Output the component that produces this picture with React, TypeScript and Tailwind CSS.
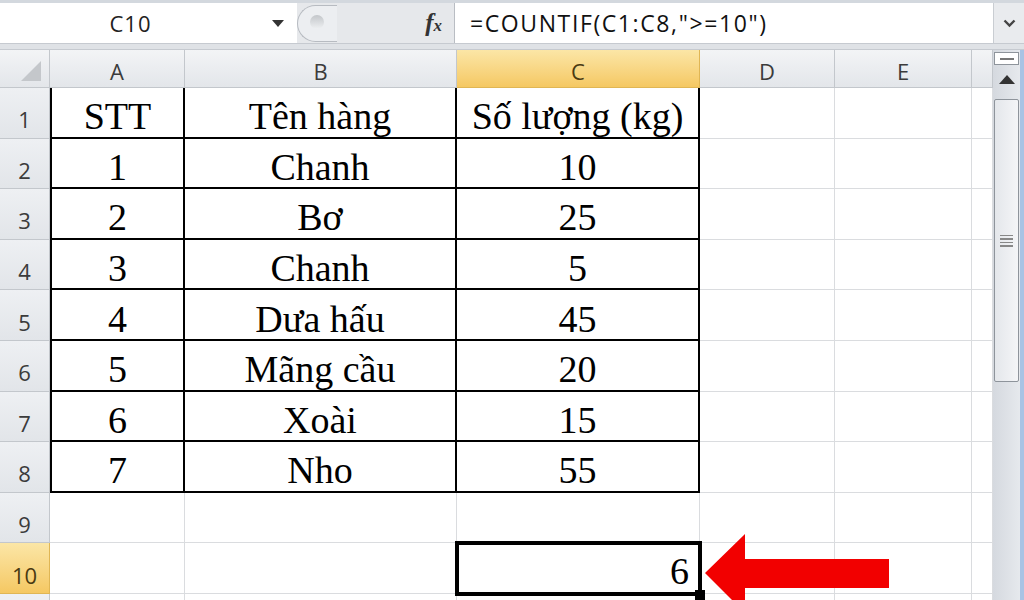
import React from 'react'

const cols = [
  { key: 'A', w: 'w-[135px]' },
  { key: 'B', w: 'w-[272px]' },
  { key: 'C', w: 'w-[243px]' },
  { key: 'D', w: 'w-[135px]' },
  { key: 'E', w: 'w-[137px]' },
  { key: 'F', w: 'flex-1' },
]

const data: [string, string, string][] = [
  ['STT', 'Tên hàng', 'Số lượng (kg)'],
  ['1', 'Chanh', '10'],
  ['2', 'Bơ', '25'],
  ['3', 'Chanh', '5'],
  ['4', 'Dưa hấu', '45'],
  ['5', 'Mãng cầu', '20'],
  ['6', 'Xoài', '15'],
  ['7', 'Nho', '55'],
]

const uiFont = { fontFamily: '"Open Sans", "Noto Sans", sans-serif' }
const cellFont = { fontFamily: '"Liberation Serif", "Times New Roman", serif' }

function FormulaBar() {
  return (
    <div className="flex h-[40px] bg-white">
      <div className="relative flex w-[297px] items-center justify-center bg-white" style={uiFont}>
        <span className="-ml-[36px] text-[22px] tracking-[1px] text-[#222]">C10</span>
        <svg className="absolute left-[272px] top-[17px]" width="12" height="7" viewBox="0 0 12 7">
          <path d="M0 0 L12 0 L6 7 Z" fill="#333" />
        </svg>
      </div>
      <div className="relative flex w-[158px] items-center justify-end border-r border-[#b9bdc3] bg-[#e6e8eb] pr-[12px]">
        <div className="absolute left-0 top-[2px] h-[37px] w-[40px] rounded-l-[20px] border-y border-l border-[#b7bbc1] bg-[#eceef1]" />
        <div className="absolute left-[13px] top-[12px] h-[14px] w-[14px] rounded-full bg-gradient-to-b from-[#c3c6ca] to-[#eef0f2]" />
        <span className="text-[25px] font-bold italic text-[#333]" style={cellFont}>
          f<span className="text-[17px]">x</span>
        </span>
      </div>
      <div className="flex flex-1 items-center pl-[15px]" style={uiFont}>
        <span className="text-[23px] tracking-[1.6px] text-[#111]">=COUNTIF(C1:C8,"&gt;=10")</span>
      </div>
      <div className="flex w-[31px] items-center justify-center border-l border-[#c9cdd2] bg-[#e9ebee]">
        <svg width="13" height="9" viewBox="0 0 13 9">
          <path d="M1.5 1.5 L6.5 6.5 L11.5 1.5" fill="none" stroke="#444" strokeWidth="2.4" />
        </svg>
      </div>
    </div>
  )
}

function HeaderRow() {
  return (
    <div className="flex h-[38px]" style={uiFont}>
      <div className="relative w-[50px] border-r border-b border-[#c3c7cc] bg-gradient-to-b from-[#f3f4f6] to-[#e3e6ea]">
        <svg className="absolute right-[8px] bottom-[6px]" width="20" height="20" viewBox="0 0 20 20">
          <path d="M20 0 L20 20 L0 20 Z" fill="#c4c7cb" />
        </svg>
      </div>
      {cols.map((c) => {
        const active = c.key === 'C'
        return (
          <div
            key={c.key}
            className={`${c.w} flex items-center justify-center border-r border-b pt-[5px] text-[22px] ${
              active
                ? 'border-[#e0b654] bg-gradient-to-b from-[#fbe6a6] to-[#f5c862] text-[#4a3a12]'
                : 'border-[#c3c7cc] bg-gradient-to-b from-[#f3f4f6] to-[#e3e6ea] text-[#3b3b3b]'
            }`}
          >
            {c.key === 'F' ? '' : c.key}
          </div>
        )
      })}
    </div>
  )
}

function DataRow({ n, values, label = true }: { n: number; values?: [string, string, string]; label?: boolean }) {
  const activeRow = n === 10
  return (
    <div className="flex h-[50.6px]">
      <div
        className={`flex w-[50px] items-center justify-center border-r border-b pt-[14px] text-[22px] ${
          activeRow
            ? 'border-[#e0b654] bg-gradient-to-b from-[#fbe6a6] to-[#f5c862] text-[#4a3a12]'
            : 'border-[#c3c7cc] bg-gradient-to-b from-[#eef0f3] to-[#e2e5e9] text-[#3b3b3b]'
        }`}
        style={uiFont}
      >
        {label ? n : ''}
      </div>
      {cols.map((c, i) => {
        const inTable = !!values && i < 3
        const border = inTable
          ? `border-r-2 border-b-2 border-black ${i === 0 ? 'border-l-2' : ''}`
          : 'border-r border-b border-[#dadcdf]'
        const isResult = activeRow && c.key === 'C'
        return (
          <div
            key={c.key}
            className={`${c.w} relative flex items-center justify-center ${border} text-[38px] leading-none text-black ${
              isResult ? 'z-10' : ''
            }`}
            style={cellFont}
          >
            {inTable ? <span className="pt-[8px]">{values![i]}</span> : null}
            {isResult && (
              <>
                <div className="absolute -top-[2px] -right-[3px] -bottom-[3px] -left-[2px] border-[4px] border-black" />
                <span className="absolute right-[10px] bottom-[3px]">6</span>
                <div className="absolute -right-[6px] -bottom-[7px] h-[10px] w-[10px] bg-black" />
              </>
            )}
          </div>
        )
      })}
    </div>
  )
}

function Scrollbar() {
  return (
    <div className="relative flex w-[31px] flex-col border-r-[4px] border-[#a9c3e4] bg-gradient-to-r from-[#d5d9df] to-[#e6e9ed]">
      <div className="mx-[1px] mt-[2px] flex h-[13px] items-center justify-center border border-[#8e949b] bg-white">
        <div className="h-[2px] w-[14px] bg-[#777]" />
      </div>
      <div className="flex h-[28px] items-center justify-center">
        <svg width="16" height="9" viewBox="0 0 16 9">
          <path d="M8 0 L16 9 L0 9 Z" fill="#333" />
        </svg>
      </div>
      <div className="mx-[1px] mt-[6px] flex h-[283px] items-center justify-center rounded-[2px] border border-[#8e949b] bg-gradient-to-r from-[#e4e7eb] to-[#f4f5f7]">
        <div className="flex flex-col gap-[2px]">
          <div className="h-[1.5px] w-[13px] bg-[#888]" />
          <div className="h-[1.5px] w-[13px] bg-[#888]" />
          <div className="h-[1.5px] w-[13px] bg-[#888]" />
          <div className="h-[1.5px] w-[13px] bg-[#888]" />
        </div>
      </div>
    </div>
  )
}

export default function App() {
  return (
    <div className="relative h-[600px] w-[1024px] overflow-hidden bg-white">
      <div className="h-[3px] bg-[#d3d8de]" />
      <FormulaBar />
      <div className="h-[7px] border-y border-[#c6cad0] bg-[#dfe2e6]" />
      <div className="flex">
        <div className="flex w-[993px] flex-col">
          <HeaderRow />
          {Array.from({ length: 11 }, (_, i) => (
            <DataRow key={i} n={i + 1} values={data[i]} label={i < 10} />
          ))}
        </div>
        <Scrollbar />
      </div>
      <svg className="absolute left-0 top-0 z-20" width="1024" height="600" viewBox="0 0 1024 600">
        <path d="M705 573 L745 534 L745 559 L889 559 L889 588 L745 588 L745 613 Z" fill="#f20000" />
      </svg>
    </div>
  )
}
